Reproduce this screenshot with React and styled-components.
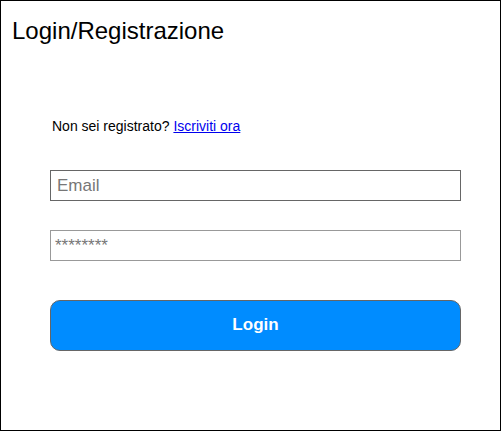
import React from "react";
import styled, { createGlobalStyle } from "styled-components";

const Global = createGlobalStyle`
  html, body { margin: 0; padding: 0; background: #fff; }
  body { font-family: "Liberation Sans", Arial, sans-serif; }
  * { box-sizing: border-box; }
`;

const Frame = styled.div`
  width: 501px;
  height: 431px;
  border: 1px solid #000;
  display: flex;
  flex-direction: column;
  background: #fff;
`;

const Title = styled.h1`
  margin: 0;
  padding: 16px 0 0 11px;
  font-size: 24px;
  font-weight: normal;
  line-height: 28px;
  color: #000;
`;

const Form = styled.div`
  display: flex;
  flex-direction: column;
  padding: 73px 0 0 49px;
  width: 460px;
`;

const Prompt = styled.p`
  margin: 0 0 0 2px;
  font-size: 14px;
  line-height: 16px;
  color: #000;
`;

const Link = styled.a`
  color: #0000ee;
  text-decoration: underline;
`;

const Field = styled.input`
  width: 411px;
  height: 31px;
  margin-top: ${(p) => p.$gap}px;
  border: 1px solid ${(p) => p.$border};
  padding: 0 ${(p) => p.$pad}px 0 ${(p) => p.$pad}px;
  font-family: "Liberation Sans", Arial, sans-serif;
  font-size: 17px;
  outline: none;
  &::placeholder { color: #777; }
`;

const Button = styled.button`
  width: 411px;
  height: 51px;
  margin-top: 39px;
  background: #008cff;
  border: 1px solid #666;
  border-radius: 10px;
  color: #fff;
  font-family: "Liberation Sans", Arial, sans-serif;
  font-weight: bold;
  font-size: 17px;
  padding: 0 0 2px;
`;

export default function App() {
  return (
    <>
      <Global />
      <Frame>
        <Title>Login/Registrazione</Title>
        <Form>
          <Prompt>
            Non sei registrato? <Link href="#">Iscriviti ora</Link>
          </Prompt>
          <Field $gap={36} $border="#666" $pad={6} placeholder="Email" />
          <Field $gap={29} $border="#999" $pad={4} placeholder="********" />
          <Button>Login</Button>
        </Form>
      </Frame>
    </>
  );
}
